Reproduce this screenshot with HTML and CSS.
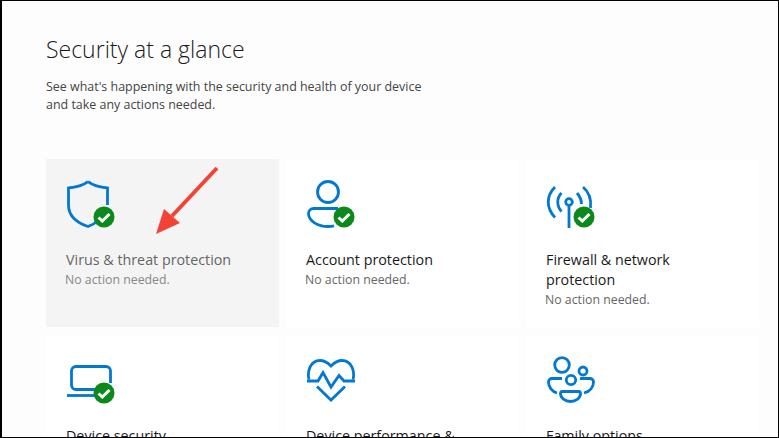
FILE: index.html
```html
<!DOCTYPE html>
<html lang="en">
<head>
<meta charset="utf-8">
<title>Security at a glance</title>
<link rel="stylesheet" href="styles.css">
</head>
<body>
<main class="window">
  <h1 class="title">Security at a glance</h1>
  <p class="intro">See what's happening with the security and health of your device<br>and take any actions needed.</p>
  <section class="grid">
    <article class="card card-active">
      <svg class="icon" viewBox="0 0 50 50"><path class="stroke" d="M22 1.700C17 5.500 10 7.500 2.500 8V25C2.500 35 10 42.500 22 46.500C26 45 29 43.500 31 41M41.500 25V8C34 7.500 27 5.500 22 1.700"/><circle class="ok" cx="38" cy="37" r="10.500"/><path class="tick" d="M32.500 37.500L36.300 41L43.500 34"/></svg>
      <h2 class="name">Virus &amp; threat protection</h2>
      <p class="status">No action needed.</p>
    </article>
    <article class="card">
      <svg class="icon" viewBox="0 0 50 50"><circle class="stroke" cx="22" cy="12" r="10.500"/><path class="stroke" d="M32 28.500H7.500A5 5 0 0 0 2.500 33.500C2.500 41 12 46.500 22 46.500C24 46.500 26 46.300 28 45.800"/><circle class="ok" cx="38" cy="37" r="10.500"/><path class="tick" d="M32.500 37.500L36.300 41L43.500 34"/></svg>
      <h2 class="name">Account protection</h2>
      <p class="status">No action needed.</p>
    </article>
    <article class="card">
      <svg class="icon" viewBox="0 0 50 50"><path class="stroke" d="M9 7C0 16 0 28 9 37.500M15.500 13C10.500 18 10.500 26 15.500 31.500M31 13C34 16.500 35.500 20 35.500 24M37 7C43 12 45.500 19 44.500 28"/><circle class="stroke" cx="23" cy="22" r="3.300"/><path class="stroke" d="M23 25V48"/><circle class="ok" cx="38" cy="37" r="10.500"/><path class="tick" d="M32.500 37.500L36.300 41L43.500 34"/></svg>
      <h2 class="name">Firewall &amp; network protection</h2>
      <p class="status">No action needed.</p>
    </article>
    <article class="card">
      <svg class="icon" viewBox="0 0 50 50"><path class="stroke" d="M30 33.500H10A4.500 4.500 0 0 1 5.500 29V15A4.500 4.500 0 0 1 10 10.500H40A4.500 4.500 0 0 1 44.500 15V27"/><path class="stroke" d="M1 39.500H30"/><circle class="ok" cx="38" cy="37" r="10.500"/><path class="tick" d="M32.500 37.500L36.300 41L43.500 34"/></svg>
      <h2 class="name">Device security</h2>
    </article>
    <article class="card">
      <svg class="icon" viewBox="0 0 50 50"><path class="stroke" d="M3 23.500C1 16 4 4.500 14 4.500C19 4.500 22 7 25 10C28 7 31 4.500 36 4.500C46 4.500 49 16 47 23.500"/><path class="stroke" d="M1 25H12L17 16.500L25 31L33 19.500L38 25H49"/><path class="stroke" d="M11 30.500L25 44L39 30.500"/></svg>
      <h2 class="name">Device performance &amp; health</h2>
    </article>
    <article class="card">
      <svg class="icon" viewBox="0 0 50 50"><circle class="stroke" cx="16" cy="9" r="7.300"/><circle class="stroke" cx="37" cy="15" r="4"/><circle class="stroke" cx="25" cy="24" r="4.700"/><path class="stroke" d="M16 22.500H6A3.500 3.500 0 0 0 2.500 26C2.500 31 6 35.500 11 37M34 22.500H44A3.500 3.500 0 0 1 47.500 26C47.500 31 44 35.500 38 37"/><path class="stroke" d="M16.500 35.500H32.500A2 2 0 0 1 34.500 37.500C34.500 42 30 45.500 24.500 45.500C19 45.500 14.500 42 14.500 37.500A2 2 0 0 1 16.500 35.500Z"/></svg>
      <h2 class="name">Family options</h2>
    </article>
  </section>
  <svg class="arrow" viewBox="0 0 70 75"><path class="arrow-line" d="M65 2L20 50"/><path class="arrow-head" d="M4 68L12 43L28 57Z"/></svg>
</main>
</body>
</html>
```

FILE: styles.css
```css
html, body {
  margin: 0;
  padding: 0;
  height: 100%;
  background: #000;
  overflow: hidden;
}

.window {
  position: relative;
  box-sizing: border-box;
  width: 776px;
  height: 436px;
  margin: 1px 1px 1px 2px;
  padding: 33px 0 0 44px;
  overflow: hidden;
  background: #fdfdfd;
  font-family: "Open Sans", "Noto Sans", sans-serif;
  color: #1a1a1a;
}

.title {
  margin: 0;
  font-size: 23px;
  line-height: 30px;
  font-weight: 300;
}

.intro {
  margin: 14px 0 0;
  font-size: 12.450px;
  line-height: 18px;
  color: #444;
}

.grid {
  display: grid;
  grid-template-columns: 233px 233px 233px;
  grid-auto-rows: 168px;
  column-gap: 7px;
  row-gap: 8px;
  margin-top: 45px;
}

.card {
  box-sizing: border-box;
  padding: 21px 40px 0 20px;
  background: #fff;
}

.card-active {
  background: #f4f4f4;
  color: #666;
}

.icon {
  display: block;
  width: 50px;
  height: 50px;
}

.stroke {
  fill: none;
  stroke: #0078d4;
  stroke-width: 2.800;
}

.ok {
  fill: #0b8a1b;
}

.tick {
  fill: none;
  stroke: #fff;
  stroke-width: 3;
}

.name {
  margin: 20px 0 0;
  font-size: 14.300px;
  line-height: 20px;
  font-weight: 400;
}

.status {
  margin: 0 0 0 -1px;
  font-size: 12.300px;
  line-height: 20px;
  color: #666;
}

.card-active .status {
  color: #888;
}

.arrow {
  position: absolute;
  left: 150px;
  top: 165px;
  width: 70px;
  height: 75px;
}

.arrow-line {
  fill: none;
  stroke: #f44336;
  stroke-width: 4;
}

.arrow-head {
  fill: #f44336;
}
```
